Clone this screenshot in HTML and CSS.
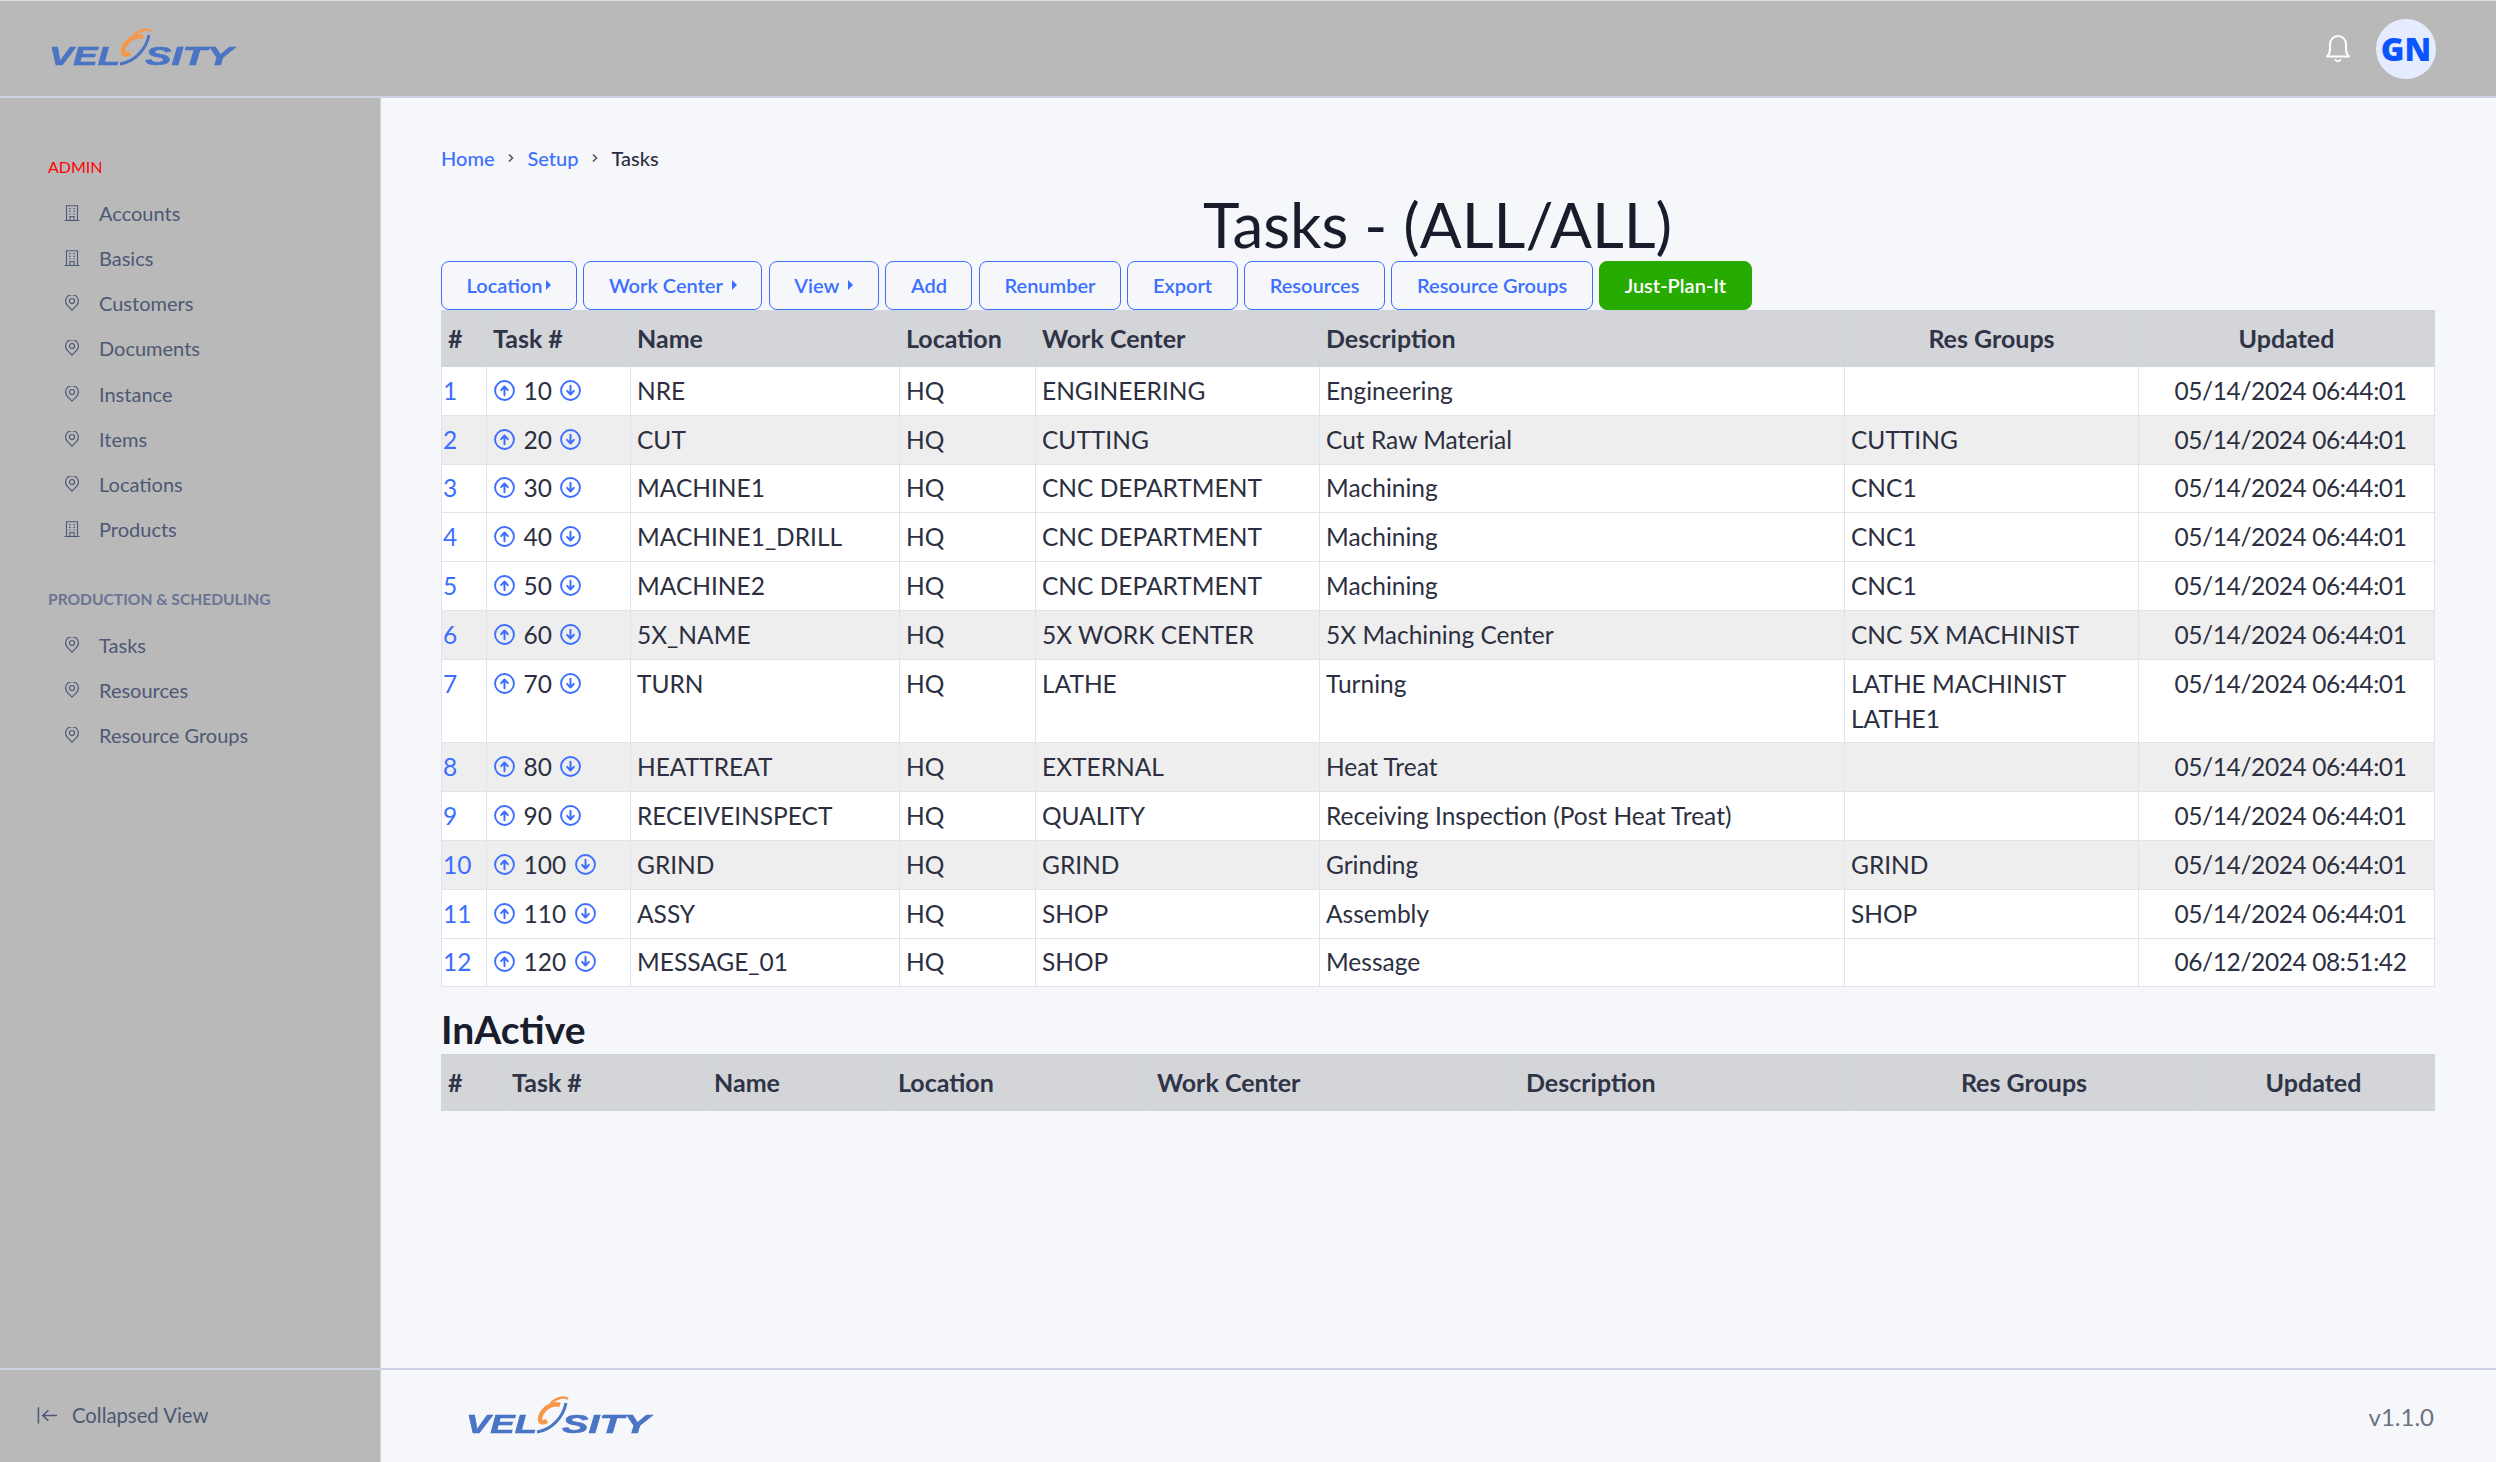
FILE: index.html
```html
<!DOCTYPE html>
<html lang="en">
<head>
    <meta charset="UTF-8">
    <title>Tasks - (ALL/ALL)</title>
    <link rel="stylesheet" href="styles.css">
</head>
<body>

<svg class="sprite" width="0" height="0">
    <symbol id="i-building" viewBox="0 0 16 16">
        <path d="M0.5 15.5h15M2.5 15.5V0.8h11v14.7M6 15.5v-4h4v4M5.2 3.6h1.4M9.4 3.6h1.4M5.2 6.4h1.4M9.4 6.4h1.4M5.2 9h1.4M9.4 9h1.4" fill="none" stroke="currentColor" stroke-width="1.1"/>
    </symbol>
    <symbol id="i-pin" viewBox="0 0 16 16">
        <path d="M8 15.2 3.4 10.4a6.4 6.4 0 1 1 9.2 0z" fill="none" stroke="currentColor" stroke-width="1.2" stroke-linejoin="round"/>
        <circle cx="8" cy="6" r="2.5" fill="none" stroke="currentColor" stroke-width="1.2"/>
    </symbol>
    <symbol id="i-up" viewBox="0 0 20 20">
        <circle cx="10" cy="10" r="9" fill="none" stroke="currentColor" stroke-width="1.8"/>
        <path d="M10 14.500v-8M6.800 9.600 10 6.200l3.200 3.400" fill="none" stroke="currentColor" stroke-width="1.9" stroke-linecap="round" stroke-linejoin="round"/>
    </symbol>
    <symbol id="i-down" viewBox="0 0 20 20">
        <circle cx="10" cy="10" r="9" fill="none" stroke="currentColor" stroke-width="1.8"/>
        <path d="M10 5.500v8M6.800 10.400 10 13.800l3.200-3.400" fill="none" stroke="currentColor" stroke-width="1.9" stroke-linecap="round" stroke-linejoin="round"/>
    </symbol>
    <symbol id="i-chev" viewBox="0 0 8 12">
        <path d="M2 2.500 5.500 6 2 9.500" fill="none" stroke="currentColor" stroke-width="1.600"/>
    </symbol>
</svg>

<header class="topbar">
    <svg class="logo" viewBox="0 0 186 40">
        <g class="logo-word">
            <text x="-1" y="37" textLength="71" lengthAdjust="spacingAndGlyphs">VEL</text>
            <text x="95" y="37" textLength="88" lengthAdjust="spacingAndGlyphs">SITY</text>
        </g>
        <path d="M70 36C84 34 96 22 99 7" fill="none" stroke="#4a74c4" stroke-width="3"/>
        <path d="M93 9C84 6 74 14 73 23C73 27 76 27 80 25" fill="none" stroke="#f7974a" stroke-width="4.500"/>
        <path d="M84 7C89 2 97 0 101 3" fill="none" stroke="#f7974a" stroke-width="2.500"/>
    </svg>
    <div class="topbar-right">
        <svg class="bell" viewBox="0 0 26 30">
            <path d="M2 23.500h22c-2-2-3-3.500-3-7V11a8 8 0 0 0-16 0v5.500c0 3.500-1 5-3 7zM10.500 27a3 3 0 0 0 5 0" fill="none" stroke="#fff" stroke-width="2" stroke-linecap="round" stroke-linejoin="round"/>
        </svg>
        <div class="avatar">GN</div>
    </div>
</header>

<div class="layout">
    <aside class="sidebar">
        <nav class="side-nav">
            <div class="side-title admin">ADMIN</div>
            <a class="side-item"><svg><use href="#i-building"/></svg>Accounts</a>
            <a class="side-item"><svg><use href="#i-building"/></svg>Basics</a>
            <a class="side-item"><svg><use href="#i-pin"/></svg>Customers</a>
            <a class="side-item"><svg><use href="#i-pin"/></svg>Documents</a>
            <a class="side-item"><svg><use href="#i-pin"/></svg>Instance</a>
            <a class="side-item"><svg><use href="#i-pin"/></svg>Items</a>
            <a class="side-item"><svg><use href="#i-pin"/></svg>Locations</a>
            <a class="side-item"><svg><use href="#i-building"/></svg>Products</a>
            <div class="side-title prod">PRODUCTION &amp; SCHEDULING</div>
            <a class="side-item"><svg><use href="#i-pin"/></svg>Tasks</a>
            <a class="side-item"><svg><use href="#i-pin"/></svg>Resources</a>
            <a class="side-item"><svg><use href="#i-pin"/></svg>Resource Groups</a>
        </nav>
        <div class="side-foot">
            <svg class="collapse" viewBox="0 0 22 20"><path d="M1.500 2v17M21 10.500H7M12 5l-6 5.500 6 5.500" fill="none" stroke="#4d5875" stroke-width="1.600"/></svg>
            Collapsed View
        </div>
    </aside>

    <div class="main">
        <main class="content">
            <div class="crumbs">
                <a>Home</a><svg><use href="#i-chev"/></svg>
                <a>Setup</a><svg><use href="#i-chev"/></svg>
                <span>Tasks</span>
            </div>
            <h1>Tasks - (ALL/ALL)</h1>
            <div class="toolbar">
                <button class="btn">Location<span class="caret tight"></span></button>
                <button class="btn">Work Center<span class="caret"></span></button>
                <button class="btn">View<span class="caret"></span></button>
                <button class="btn">Add</button>
                <button class="btn">Renumber</button>
                <button class="btn">Export</button>
                <button class="btn">Resources</button>
                <button class="btn">Resource Groups</button>
                <button class="btn green">Just-Plan-It</button>
            </div>

            <table class="tasks">
                <colgroup>
                    <col class="c45"><col class="c144"><col class="c269"><col class="c136"><col class="c284"><col class="c525"><col class="c294"><col class="c296">
                </colgroup>
                <thead>
                    <tr><th>#</th><th>Task #</th><th>Name</th><th>Location</th><th>Work Center</th><th>Description</th><th class="mid">Res Groups</th><th class="mid">Updated</th></tr>
                </thead>
                <tbody>
                    <tr><td class="num"><a>1</a></td><td><span class="seq"><svg><use href="#i-up"/></svg>10<svg><use href="#i-down"/></svg></span></td><td>NRE</td><td>HQ</td><td>ENGINEERING</td><td>Engineering</td><td></td><td class="mid date">05/14/2024 06:44:01</td></tr>
                    <tr class="alt"><td class="num"><a>2</a></td><td><span class="seq"><svg><use href="#i-up"/></svg>20<svg><use href="#i-down"/></svg></span></td><td>CUT</td><td>HQ</td><td>CUTTING</td><td>Cut Raw Material</td><td>CUTTING</td><td class="mid date">05/14/2024 06:44:01</td></tr>
                    <tr><td class="num"><a>3</a></td><td><span class="seq"><svg><use href="#i-up"/></svg>30<svg><use href="#i-down"/></svg></span></td><td>MACHINE1</td><td>HQ</td><td>CNC DEPARTMENT</td><td>Machining</td><td>CNC1</td><td class="mid date">05/14/2024 06:44:01</td></tr>
                    <tr><td class="num"><a>4</a></td><td><span class="seq"><svg><use href="#i-up"/></svg>40<svg><use href="#i-down"/></svg></span></td><td>MACHINE1_DRILL</td><td>HQ</td><td>CNC DEPARTMENT</td><td>Machining</td><td>CNC1</td><td class="mid date">05/14/2024 06:44:01</td></tr>
                    <tr><td class="num"><a>5</a></td><td><span class="seq"><svg><use href="#i-up"/></svg>50<svg><use href="#i-down"/></svg></span></td><td>MACHINE2</td><td>HQ</td><td>CNC DEPARTMENT</td><td>Machining</td><td>CNC1</td><td class="mid date">05/14/2024 06:44:01</td></tr>
                    <tr class="alt"><td class="num"><a>6</a></td><td><span class="seq"><svg><use href="#i-up"/></svg>60<svg><use href="#i-down"/></svg></span></td><td>5X_NAME</td><td>HQ</td><td>5X WORK CENTER</td><td>5X Machining Center</td><td>CNC 5X MACHINIST</td><td class="mid date">05/14/2024 06:44:01</td></tr>
                    <tr><td class="num"><a>7</a></td><td><span class="seq"><svg><use href="#i-up"/></svg>70<svg><use href="#i-down"/></svg></span></td><td>TURN</td><td>HQ</td><td>LATHE</td><td>Turning</td><td>LATHE MACHINIST<br>LATHE1</td><td class="mid date">05/14/2024 06:44:01</td></tr>
                    <tr class="alt"><td class="num"><a>8</a></td><td><span class="seq"><svg><use href="#i-up"/></svg>80<svg><use href="#i-down"/></svg></span></td><td>HEATTREAT</td><td>HQ</td><td>EXTERNAL</td><td>Heat Treat</td><td></td><td class="mid date">05/14/2024 06:44:01</td></tr>
                    <tr><td class="num"><a>9</a></td><td><span class="seq"><svg><use href="#i-up"/></svg>90<svg><use href="#i-down"/></svg></span></td><td>RECEIVEINSPECT</td><td>HQ</td><td>QUALITY</td><td>Receiving Inspection (Post Heat Treat)</td><td></td><td class="mid date">05/14/2024 06:44:01</td></tr>
                    <tr class="alt"><td class="num"><a>10</a></td><td><span class="seq"><svg><use href="#i-up"/></svg>100<svg><use href="#i-down"/></svg></span></td><td>GRIND</td><td>HQ</td><td>GRIND</td><td>Grinding</td><td>GRIND</td><td class="mid date">05/14/2024 06:44:01</td></tr>
                    <tr><td class="num"><a>11</a></td><td><span class="seq"><svg><use href="#i-up"/></svg>110<svg><use href="#i-down"/></svg></span></td><td>ASSY</td><td>HQ</td><td>SHOP</td><td>Assembly</td><td>SHOP</td><td class="mid date">05/14/2024 06:44:01</td></tr>
                    <tr><td class="num"><a>12</a></td><td><span class="seq"><svg><use href="#i-up"/></svg>120<svg><use href="#i-down"/></svg></span></td><td>MESSAGE_01</td><td>HQ</td><td>SHOP</td><td>Message</td><td></td><td class="mid date">06/12/2024 08:51:42</td></tr>
                </tbody>
            </table>

            <h2>InActive</h2>
            <table class="tasks">
                <colgroup>
                    <col class="i64"><col class="i202"><col class="i184"><col class="i259"><col class="i369"><col class="i336"><col class="i337"><col class="i242">
                </colgroup>
                <thead>
                    <tr><th>#</th><th>Task #</th><th>Name</th><th>Location</th><th>Work Center</th><th>Description</th><th class="mid">Res Groups</th><th class="mid">Updated</th></tr>
                </thead>
            </table>
        </main>
        <footer class="footer">
            <svg class="logo" viewBox="0 0 186 40">
                <g class="logo-word">
                    <text x="-1" y="37" textLength="71" lengthAdjust="spacingAndGlyphs">VEL</text>
                    <text x="95" y="37" textLength="88" lengthAdjust="spacingAndGlyphs">SITY</text>
                </g>
                <path d="M70 36C84 34 96 22 99 7" fill="none" stroke="#4a74c4" stroke-width="3"/>
                <path d="M93 9C84 6 74 14 73 23C73 27 76 27 80 25" fill="none" stroke="#f7974a" stroke-width="4.500"/>
                <path d="M84 7C89 2 97 0 101 3" fill="none" stroke="#f7974a" stroke-width="2.500"/>
            </svg>
            <span class="version">v1.1.0</span>
        </footer>
    </div>
</div>

</body>
</html>
```
FILE: styles.css
```css
* {
    box-sizing: border-box;
}

html, body {
    height: 100%;
}

body {
    margin: 0;
    display: flex;
    flex-direction: column;
    height: 100vh;
    overflow: hidden;
    font-family: Lato, "Noto Sans", sans-serif;
    color: #2b2f3f;
    background-color: #f5f7fb;
}

.sprite {
    position: absolute;
}

/* top bar */
.topbar {
    flex: none;
    height: 98px;
    padding: 0 60px 0 50px;
    display: flex;
    justify-content: space-between;
    align-items: center;
    background-color: #b9b9b9;
    border-top: 1px solid #dedede;
    border-bottom: 2px solid #ccd2e2;
}

.logo {
    display: block;
    width: 186px;
    height: 40px;
    overflow: visible;
    filter: blur(0.5px);
}

.topbar .logo {
    margin-top: -2px;
}

.logo-word text {
    font-family: "Liberation Sans", sans-serif;
    font-size: 25px;
    font-weight: 700;
    font-style: italic;
    fill: #4a74c4;
    stroke: #4a74c4;
    stroke-width: 0.600px;
}

.topbar-right {
    display: flex;
    align-items: center;
    gap: 25px;
}

.bell {
    width: 26px;
    height: 30px;
    margin-top: -2px;
}

.avatar {
    width: 60px;
    height: 60px;
    border-radius: 50%;
    display: flex;
    justify-content: center;
    align-items: center;
    background-color: #e5ecff;
    color: #0a55ff;
    font-family: "Open Sans", sans-serif;
    font-size: 32px;
    font-weight: 800;
}

.layout {
    flex: 1;
    min-height: 0;
    display: flex;
}

/* sidebar */
.sidebar {
    flex: none;
    width: 381px;
    display: flex;
    flex-direction: column;
    background-color: #b9b9b9;
    border-right: 1px solid #ccd2e2;
}

.side-nav {
    flex: 1;
    padding: 58px 0 0 48px;
}

.side-title {
    font-size: 16px;
    line-height: 22px;
}

.admin {
    color: #ff0000;
    margin-bottom: 12px;
}

.prod {
    margin-top: 36px;
    margin-bottom: 12px;
    font-size: 15.600px;
    color: #6b7494;
    font-weight: 700;
}

.side-item {
    height: 45.250px;
    padding-left: 16px;
    display: flex;
    align-items: center;
    gap: 19px;
    font-size: 20px;
    color: #4d5875;
}

.side-item svg {
    width: 16px;
    height: 16px;
}

.side-foot {
    flex: none;
    height: 94px;
    padding: 0 0 2px 37px;
    display: flex;
    align-items: center;
    gap: 14px;
    font-size: 20.300px;
    color: #4d5875;
    border-top: 2px solid #ccd2e2;
}

.collapse {
    width: 21px;
    height: 20px;
}

/* main */
.main {
    flex: 1;
    min-width: 0;
    display: flex;
    flex-direction: column;
}

.content {
    flex: 1;
    min-height: 0;
    padding: 46px 62px 0 60px;
}

.crumbs {
    height: 28px;
    display: flex;
    align-items: center;
    font-size: 20px;
    font-weight: 500;
}

.crumbs a {
    color: #3d6fff;
}

.crumbs svg {
    width: 8px;
    height: 12px;
    margin: 0 12.500px;
    color: #555;
}

h1 {
    margin: 0;
    height: 89px;
    padding-top: 14px;
    text-align: center;
    font-size: 62px;
    font-weight: 400;
    line-height: 76px;
    color: #181c2b;
}

.toolbar {
    height: 49px;
    display: flex;
    gap: 6.500px;
}

.btn {
    height: 49px;
    padding: 0 24.500px 2px;
    display: flex;
    align-items: center;
    font-family: inherit;
    font-size: 20px;
    font-weight: 600;
    color: #3d6fff;
    background: transparent;
    border: 1px solid #3d6fff;
    border-radius: 8px;
}

.btn.green {
    color: #fff;
    background-color: #28ab00;
    border-color: #28ab00;
}

.caret {
    width: 0;
    height: 0;
    margin-left: 9px;
    border-left: 5px solid currentColor;
    border-top: 5px solid transparent;
    border-bottom: 5px solid transparent;
}

.caret.tight {
    margin-left: 4px;
}

/* tables */
.tasks {
    width: 100%;
    table-layout: fixed;
    border-collapse: collapse;
    font-size: 24.500px;
}

.tasks th, .tasks td {
    padding: 5.900px 6px 6.900px;
    text-align: left;
    vertical-align: top;
    line-height: 35px;
    font-weight: 400;
    color: #2b2f3f;
    border: 1px solid #e1e4ec;
}

.tasks th {
    padding: 10px 6px;
    font-size: 25px;
    font-weight: 700;
    color: #2f3447;
    background-color: #d4d5d9;
    border-color: #cfd3de;
}

.tasks .mid {
    text-align: center;
}

.tasks .date {
    padding-left: 14px;
    letter-spacing: -0.400px;
}

.tasks tbody tr {
    background-color: #fff;
}

.tasks tbody tr.alt {
    background-color: #eee;
}

.tasks td.num {
    padding-left: 1px;
    padding-right: 1px;
}

.tasks a {
    color: #3d6fff;
}

.seq {
    display: flex;
    align-items: center;
    gap: 8.500px;
    height: 35px;
    margin-left: 1px;
}

.seq svg {
    width: 21px;
    height: 21px;
    color: #3d6fff;
}

.c45 { width: 45px; }
.c144 { width: 144px; }
.c269 { width: 269px; }
.c136 { width: 136px; }
.c284 { width: 284px; }
.c525 { width: 525px; }
.c294 { width: 294px; }
.c296 { width: 296px; }

.i64 { width: 64px; }
.i202 { width: 202px; }
.i184 { width: 184px; }
.i259 { width: 259px; }
.i369 { width: 369px; }
.i336 { width: 336px; }
.i337 { width: 337px; }
.i242 { width: 242px; }

h2 {
    margin: 0;
    height: 67px;
    padding-top: 22px;
    font-size: 39px;
    font-weight: 700;
    line-height: 40px;
    color: #181c2b;
}

/* footer */
.footer {
    flex: none;
    height: 94px;
    padding: 0 62px 0 86px;
    display: flex;
    justify-content: space-between;
    align-items: center;
    border-top: 2px solid #ccd2e2;
}

.version {
    font-size: 24px;
    color: #6b7280;
}
```
